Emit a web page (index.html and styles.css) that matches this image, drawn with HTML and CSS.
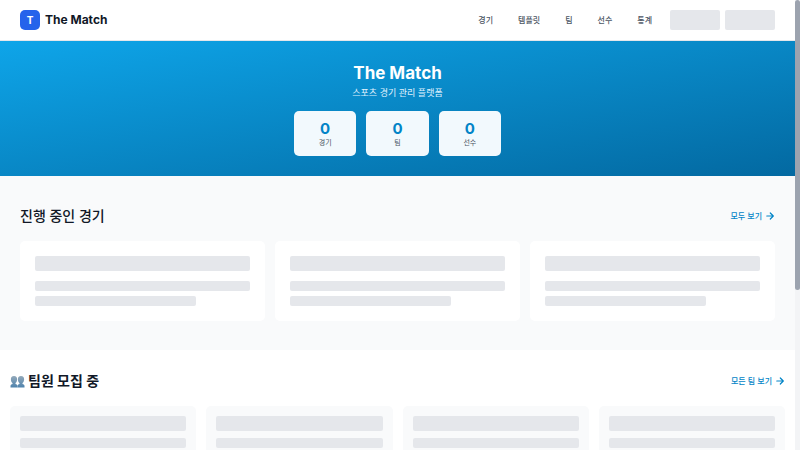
FILE: index.html
```
<!DOCTYPE html>
<html lang="ko">
<head>
<meta charset="utf-8">
<meta name="viewport" content="width=device-width, initial-scale=1">
<title>The Match</title>
<link rel="stylesheet" href="styles.css">
</head>
<body>
<header class="site-header">
  <a class="brand" href="#"><span class="brand-mark">T</span><span class="brand-name">The Match</span></a>
  <nav class="nav">
    <a href="#">경기</a>
    <a href="#">템플릿</a>
    <a href="#">팀</a>
    <a href="#">선수</a>
    <a href="#">통계</a>
  </nav>
  <div class="account">
    <span class="bone account-bone"></span>
    <span class="bone account-bone"></span>
  </div>
</header>
<main>
  <section class="hero">
    <h1 class="hero-title">The Match</h1>
    <p class="hero-sub">스포츠 경기 관리 플랫폼</p>
    <div class="stats">
      <div class="stat"><strong>0</strong><span>경기</span></div>
      <div class="stat"><strong>0</strong><span>팀</span></div>
      <div class="stat"><strong>0</strong><span>선수</span></div>
    </div>
  </section>

  <section class="section matches">
    <div class="section-head">
      <h2>진행 중인 경기</h2>
      <a class="more" href="#">모두 보기
        <svg class="arrow" viewBox="0 0 10 10" aria-hidden="true"><path d="M1.800 5h6.500M5.300 2 8.300 5 5.300 8"/></svg></a>
    </div>
    <div class="match-grid">
      <div class="card match-card"><div class="bone bone-title"></div><div class="bone bone-line"></div><div class="bone bone-line short"></div></div>
      <div class="card match-card"><div class="bone bone-title"></div><div class="bone bone-line"></div><div class="bone bone-line short"></div></div>
      <div class="card match-card"><div class="bone bone-title"></div><div class="bone bone-line"></div><div class="bone bone-line short"></div></div>
    </div>
  </section>

  <section class="section teams">
    <div class="section-head">
      <h2 class="bold"><svg class="people" viewBox="0 0 15 13" aria-hidden="true">
        <defs><linearGradient id="bust" x1="0" y1="0" x2="0" y2="1"><stop offset="0" stop-color="#93a9ba"/><stop offset="1" stop-color="#4f83ad"/></linearGradient></defs>
        <g fill="url(#bust)"><path id="person" d="M4 1C6.300 1 7.200 2.400 7.100 4.400 7 6 6.400 7.300 5.500 8V9C6.700 9.500 7.500 9.600 7.500 11V12.500H.5V11C.5 9.600 1.300 9.500 2.500 9V8C1.600 7.300 1 6 .9 4.400 .8 2.400 1.700 1 4 1Z"/><use href="#person" x="7"/></g>
      </svg>팀원 모집 중</h2>
      <a class="more" href="#">모든 팀 보기
        <svg class="arrow" viewBox="0 0 10 10" aria-hidden="true"><path d="M1.800 5h6.500M5.300 2 8.300 5 5.300 8"/></svg></a>
    </div>
    <div class="team-grid">
      <div class="card team-card"><div class="bone bone-title"></div><div class="bone bone-line"></div></div>
      <div class="card team-card"><div class="bone bone-title"></div><div class="bone bone-line"></div></div>
      <div class="card team-card"><div class="bone bone-title"></div><div class="bone bone-line"></div></div>
      <div class="card team-card"><div class="bone bone-title"></div><div class="bone bone-line"></div></div>
    </div>
  </section>
</main>
<div class="scroll-track" aria-hidden="true"><div class="scroll-thumb"></div></div>
</body>
</html>
```
FILE: styles.css
```
* { box-sizing: border-box; }

html { overflow: hidden; }

body {
  margin: 0;
  padding-right: 5px;
  background: #fff;
  color: #111827;
  font-family: Inter, "Noto Sans CJK KR", sans-serif;
  font-size: 8px;
  line-height: 14px;
}

a { color: inherit; text-decoration: none; }
h1, h2, p { margin: 0; }

.site-header {
  display: flex;
  align-items: center;
  padding: 10px 20px;
  border-bottom: 1px solid #e5e7eb;
}

.brand { display: flex; align-items: center; gap: 5px; margin-right: auto; }
.brand-mark {
  width: 20px;
  border-radius: 5px;
  background: #2563eb;
  color: #fff;
  font-size: 10px;
  font-weight: 700;
  line-height: 20px;
  text-align: center;
}
.brand-name { font-size: 12px; font-weight: 700; }

.nav { display: flex; gap: 25px; margin-right: 18px; color: #4b5563; font-weight: 500; }
.account { display: flex; gap: 5px; }
.account-bone { width: 50px; height: 20px; }

.bone { border-radius: 2px; background: #e5e7eb; }

.hero {
  display: flex;
  flex-direction: column;
  align-items: center;
  padding: 20px;
  background: linear-gradient(to bottom right, #0ea5e9, #0369a1);
  color: #fff;
}
.hero-title { font-size: 17px; font-weight: 700; line-height: 24px; }
.hero-sub { margin-bottom: 10px; color: #e0f2fe; font-size: 9px; line-height: 16px; }
.stats { display: grid; grid-template-columns: repeat(3, 1fr); gap: 10px; width: 207px; }
.stat {
  display: flex;
  flex-direction: column;
  align-items: center;
  padding: 10px 8px 7px;
  border-radius: 5px;
  background: #f2f9fd;
}
.stat strong { color: #0284c7; font-size: 15px; line-height: 16px; }
.stat span { color: #4b5563; font-size: 7px; line-height: 12px; }

.section-head {
  display: flex;
  align-items: center;
  justify-content: space-between;
  margin-bottom: 15px;
}
.section-head h2 { display: flex; align-items: center; gap: 3px; font-size: 14px; font-weight: 500; line-height: 20px; }
.section-head .bold { font-weight: 700; }
.more { display: flex; align-items: center; gap: 3px; color: #0284c7; font-weight: 500; }
.arrow { width: 10px; height: 10px; fill: none; stroke: currentColor; stroke-width: 1.2; stroke-linecap: round; stroke-linejoin: round; }
.people { width: 15px; height: 13px; }

.matches { padding: 30px 20px 29px; background: #f9fafb; }
.teams { padding: 21px 10px 20px; }
.match-grid { display: grid; grid-template-columns: repeat(3, 1fr); gap: 10px; }
.team-grid { display: grid; grid-template-columns: repeat(4, 1fr); gap: 10px; }

.card { border-radius: 5px; }
.match-card { padding: 15px; background: #fff; }
.team-card { padding: 10px; background: #f9fafb; }
.bone-title { height: 15px; }
.bone-line { height: 10px; }
.short { width: 75%; }
.match-card .bone-title { margin-bottom: 10px; }
.match-card .short { margin-top: 5px; }
.team-card .bone-title { margin-bottom: 7px; }

.scroll-track { position: fixed; top: 0; right: 0; bottom: 0; width: 5px; background: #f3f4f6; }
.scroll-thumb { height: 64.5%; border-radius: 3px; background: #9ca3af; }
```
